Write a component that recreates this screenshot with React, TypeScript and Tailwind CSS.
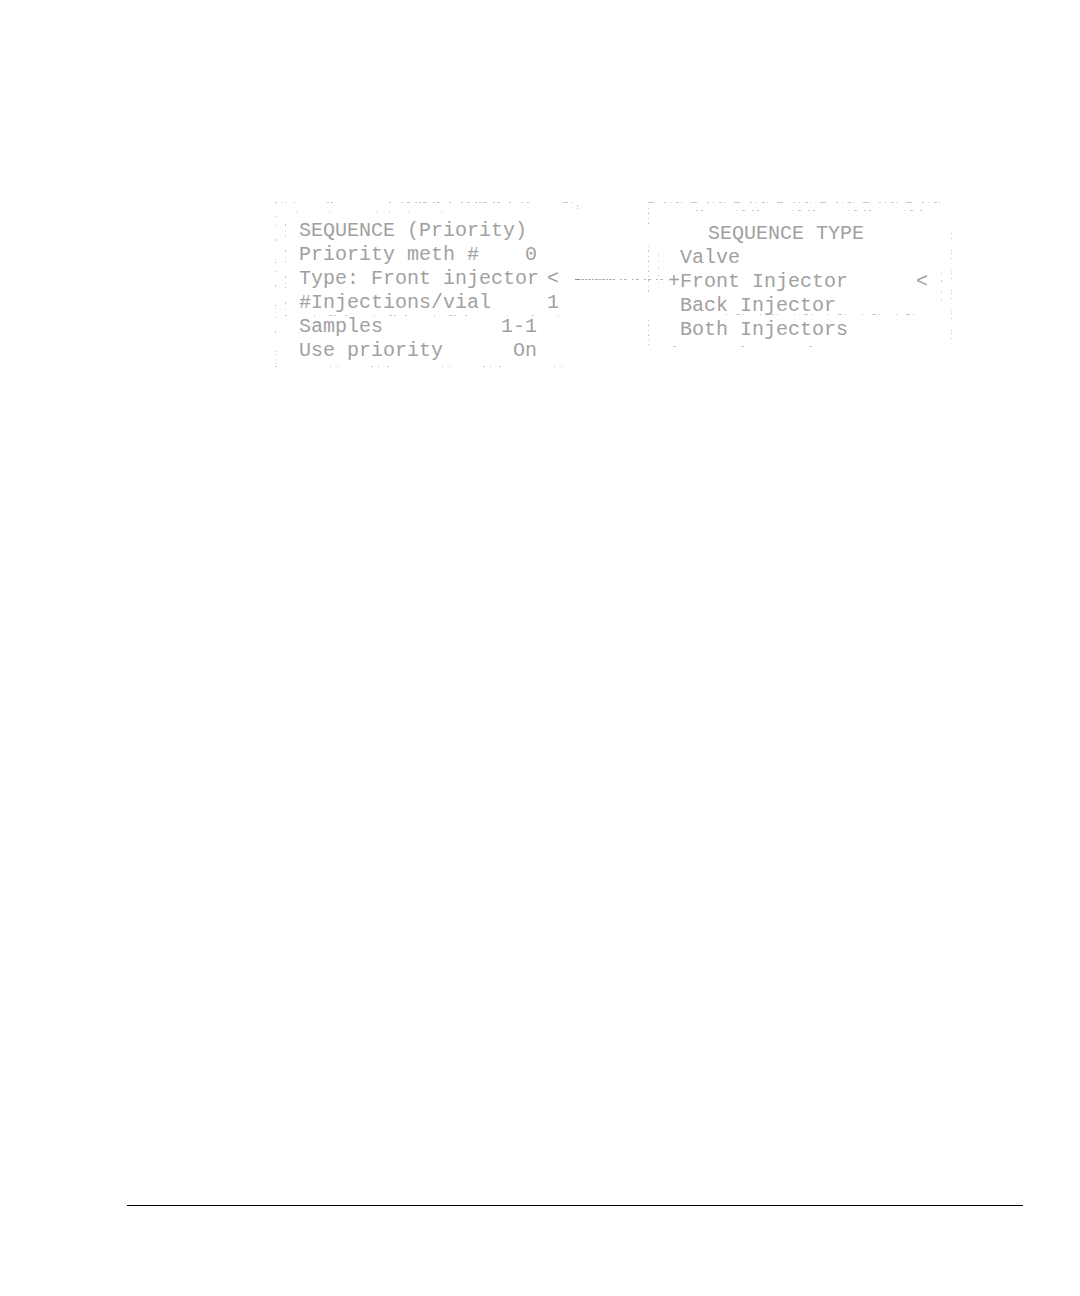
const TEXT = "font-['Liberation_Mono',monospace] text-[20px] leading-6 text-neutral-400"

const sequence = [
  { label: 'Priority meth #', value: '0', wide: false },
  { label: 'Type: Front injector', value: '<', wide: true },
  { label: '#Injections/vial', value: '1', wide: true },
  { label: 'Samples', value: '1-1', wide: false },
  { label: 'Use priority', value: 'On', wide: false }
]

const types = ['Valve', 'Front Injector', 'Back Injector', 'Both Injectors']

// Faint dotted outline of the display and of its inner window
function SequenceFrame() {
  return (
    <svg className="absolute inset-0 h-full w-full" viewBox="0 0 304 168" fill="none" stroke="#c8c8c8" aria-hidden="true">
      <path d="M0 2.5H64" strokeDasharray="2 5 1 3 1 7 1 32 2 2 2 9" />
      <path d="M114 2.5H254" strokeDasharray="2 10 2 4 3 5 2 2 2 2 4 6 2 2 3 9" />
      <path d="M288 2.5H302" strokeDasharray="5 4 1 4" />
      <path d="M21 12.5H190" strokeDasharray="1 32 1 46 1 12 1 18" />
      <path d="M.5 16V168" strokeDasharray="1 8 1 13 2 18 1 2" />
      <path d="M10.5 24V112" strokeDasharray="2 5 1 3 1 14" />
      <path d="M10 115.5H206" strokeDasharray="2 27 1 14 3 2 2 9" />
      <path d="M232 115.5H304" strokeDasharray="1 24 2 24" />
      <path d="M0 166.5H290" strokeDasharray="2 53 1 6 1 33 2 5 1 8" />
      <path d="M302.5 5V9" strokeDasharray="2 1" />
    </svg>
  )
}

function TypeFrame() {
  return (
    <svg className="absolute inset-0 h-full w-full" viewBox="0 0 304 148" fill="none" stroke="#c8c8c8" aria-hidden="true">
      <path d="M0 2.5H300" strokeDasharray="6 10 2 4 1 5 3 2 1 9" />
      <path d="M48 10.5H274" strokeDasharray="2 3 2 33 1 5 3 7" />
      <path d="M.5 8V25M.5 46V92M.5 120V145" strokeDasharray="1 3 2 4" />
      <path d="M10.5 54V83" strokeDasharray="1 6" />
      <path d="M303.5 33V145" strokeDasharray="1 4 1 11 1 2" />
      <path d="M293.5 73V100" strokeDasharray="1 6 2 10" />
      <path d="M78 114.5H274" strokeDasharray="1 9 4 3 1 16" />
      <path d="M25 146.5H210" strokeDasharray="3 65" />
    </svg>
  )
}

export default function App() {
  return (
    <div className="flex min-h-screen flex-col bg-white pt-[200px] pr-[57px] pb-[90px] pl-[127px]">
      <main className="flex flex-1 items-start pl-[148px]">
        <section className={`relative w-[304px] pt-[19px] pb-[5px] pl-6 ${TEXT}`}>
          <SequenceFrame />
          <h1 className="whitespace-pre">SEQUENCE (Priority)</h1>
          <dl>
            {sequence.map((row) => (
              <div key={row.label} className={`flex justify-between whitespace-pre ${row.wide ? 'pr-5' : 'pr-[42px]'}`}>
                <dt>{row.label}</dt>
                <dd>{row.value}</dd>
              </div>
            ))}
          </dl>
        </section>

        <svg className="mt-[77px] -mr-4 -ml-1 h-1 w-[89px] shrink-0" viewBox="0 0 89 4" fill="none" aria-hidden="true">
          <path d="M0 2.5H5" stroke="#8f8f8f" />
          <path d="M6 2.5H40" stroke="#b0b0b0" strokeDasharray="3 1 2 1" />
          <path d="M45 2.5H88" stroke="#b8b8b8" strokeDasharray="2 2 3 5" />
        </svg>

        <section className={`relative w-[304px] pt-[22px] pb-[6px] pl-5 ${TEXT}`}>
          <TypeFrame />
          <h2 className="whitespace-pre pl-10">SEQUENCE TYPE</h2>
          <ul>
            {types.map((type) => (
              <li key={type} className="flex whitespace-pre pr-6">
                <span>{type === 'Front Injector' ? '+' : ' '}</span>
                <span className="flex-1">{type}</span>
                {type === 'Front Injector' && <span>&lt;</span>}
              </li>
            ))}
          </ul>
        </section>
      </main>
      <hr className="border-black" />
    </div>
  )
}
